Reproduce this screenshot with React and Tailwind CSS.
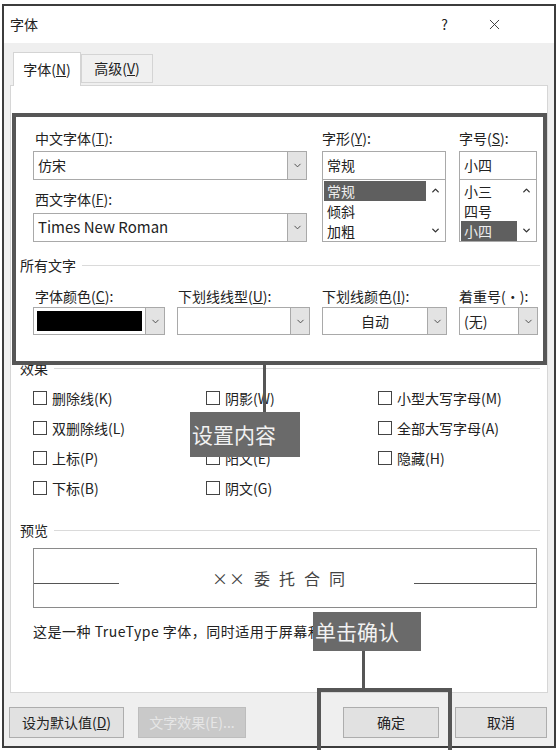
import { ChevronDown, ChevronUp, X } from 'lucide-react'

function Select({ children, className = '', center = false }) {
  return (
    <div className={`flex h-[29px] border border-[#a9a9a9] bg-white ${className}`}>
      <div className={`flex flex-1 items-center px-[4px] text-[14px] text-[#222] ${center ? 'justify-center' : ''}`}>{children}</div>
      <div className="flex w-[19px] items-center justify-center border-l border-[#a9a9a9] bg-[#e3e3e3]">
        <ChevronDown size={11} strokeWidth={2} className="text-[#444]" />
      </div>
    </div>
  )
}

function ListBox({ value, items, selected, width }) {
  return (
    <div style={{ width }}>
      <div className="flex h-[29px] items-center border border-[#a9a9a9] bg-white px-[4px] text-[14px] text-[#222]">{value}</div>
      <div className="flex h-[62px] border border-t-0 border-[#a9a9a9] bg-white">
        <div className="flex flex-1 flex-col pl-px pt-px">
          {items.map((it) => (
            <div key={it} className={`flex h-[20px] items-center px-[3px] text-[14px] ${it === selected ? 'bg-[#5f5f5f] text-[#eee]' : 'text-[#222]'}`}>{it}</div>
          ))}
        </div>
        <div className="flex w-[19px] flex-col items-center justify-between py-[5px]">
          <ChevronUp size={11} strokeWidth={3} className="text-[#333]" />
          <ChevronDown size={11} strokeWidth={3} className="text-[#333]" />
        </div>
      </div>
    </div>
  )
}

function Group({ label }) {
  return (
    <div className="flex h-[16px] items-center pl-[9px] pr-[7px]">
      <span className="text-[14px] text-[#222]">{label}</span>
      <div className="ml-[6px] h-px flex-1 bg-[#dadada]" />
    </div>
  )
}

function Check({ label }) {
  return (
    <div className="flex h-[30px] items-center">
      <div className="h-[14px] w-[14px] border border-[#444] bg-white" />
      <span className="ml-[5px] text-[14px] text-[#222]">{label}</span>
    </div>
  )
}

const col1 = ['删除线(K)', '双删除线(L)', '上标(P)', '下标(B)']
const col2 = ['阴影(W)', '空心(O)', '阳文(E)', '阴文(G)']
const col3 = ['小型大写字母(M)', '全部大写字母(A)', '隐藏(H)']

export default function App() {
  return (
    <div className="relative h-[750px] w-[558px] overflow-hidden bg-white font-['Noto_Sans_CJK_SC','Liberation_Sans',sans-serif]">
      <div className="ml-[2px] mt-[4px] flex h-[744px] w-[554px] flex-col border-2 border-[#3c3c3c] bg-[#efefef]">
        {/* title bar */}
        <div className="flex h-[37px] items-center bg-white pl-[6px] text-[14px] text-[#222]">
          <span>字体</span>
          <div className="flex-1" />
          <span className="mr-[38px] text-[14px]">?</span>
          <X size={17} strokeWidth={1.3} className="mr-[51px] text-[#333]" />
        </div>

        {/* tabs */}
        <div className="flex h-[42px] items-end pl-[9px]">
          <div className="relative z-10 -mb-px flex h-[34px] w-[68px] items-center justify-center border border-b-0 border-[#d4d4d4] bg-white text-[14px] text-[#222]">字体(<u>N</u>)</div>
          <div className="mb-[2px] flex h-[29px] w-[72px] items-center justify-center border border-[#d4d4d4] bg-[#f0f0f0] text-[14px] text-[#222]">高级(<u>V</u>)</div>
        </div>

        {/* panel */}
        <div className="mx-[6px] flex h-[608px] flex-col border border-[#d6d6d6] bg-white pt-[44px]">
          <div className="flex pl-[22px]">
            <div className="w-[274px]">
              <div className="h-[16px] pl-[2px] text-[14px] leading-[16px] text-[#222]">中文字体(<u>T</u>):</div>
              <Select className="mt-[5px]">仿宋</Select>
              <div className="mt-[11px] h-[16px] pl-[2px] text-[14px] leading-[16px] text-[#222]">西文字体(<u>F</u>):</div>
              <Select className="mt-[6px]"><span className="text-[15px]">Times New Roman</span></Select>
            </div>
            <div className="ml-[15px]">
              <div className="mb-[5px] h-[16px] text-[14px] leading-[16px] text-[#222]">字形(<u>Y</u>):</div>
              <ListBox value="常规" items={['常规', '倾斜', '加粗']} selected="常规" width={124} />
            </div>
            <div className="ml-[13px]">
              <div className="mb-[5px] h-[16px] text-[14px] leading-[16px] text-[#222]">字号(<u>S</u>):</div>
              <ListBox value="小四" items={['小三', '四号', '小四']} selected="小四" width={78} />
            </div>
          </div>

          <div className="mt-[15px]">
            <Group label="所有文字" />
          </div>

          <div className="mt-[15px] flex pl-[22px]">
            <div className="w-[132px]">
              <div className="h-[16px] pl-[2px] text-[14px] leading-[16px] text-[#222]">字体颜色(<u>C</u>):</div>
              <div className="mt-[3px] flex h-[28px] border border-[#a9a9a9] bg-white">
                <div className="m-[3px] flex-1 bg-black" />
                <div className="flex w-[19px] items-center justify-center border-l border-[#a9a9a9] bg-[#e3e3e3]">
                  <ChevronDown size={11} strokeWidth={2} className="text-[#444]" />
                </div>
              </div>
            </div>
            <div className="ml-[12px] w-[133px]">
              <div className="h-[16px] pl-[1px] text-[14px] leading-[16px] text-[#222]">下划线线型(<u>U</u>):</div>
              <Select className="mt-[3px] !h-[28px]"> </Select>
            </div>
            <div className="ml-[12px] w-[125px]">
              <div className="h-[16px] text-[14px] leading-[16px] text-[#222]">下划线颜色(<u>I</u>):</div>
              <Select className="mt-[3px] !h-[28px]" center>自动</Select>
            </div>
            <div className="ml-[12px] w-[79px]">
              <div className="h-[16px] whitespace-nowrap text-[14px] leading-[16px] text-[#222]">着重号(·):</div>
              <Select className="mt-[3px] !h-[28px]">(无)</Select>
            </div>
          </div>

          <div className="mt-[25px]">
            <Group label="效果" />
          </div>

          <div className="mt-[7px] flex pl-[22px]">
            <div className="w-[173px]">{col1.map((c) => <Check key={c} label={c} />)}</div>
            <div className="w-[172px]">{col2.map((c) => <Check key={c} label={c} />)}</div>
            <div>{col3.map((c) => <Check key={c} label={c} />)}</div>
          </div>

          <div className="mt-[19px]">
            <Group label="预览" />
          </div>

          <div className="ml-[22px] mt-[10px] flex h-[60px] w-[504px] items-center border border-[#8a8a8a] bg-white">
            <div className="mt-[10px] h-px w-[85px] bg-[#555]" />
            <div className="flex-1 pl-[93px] text-[16px] text-[#444]">
              <span className="tracking-[1px]">××</span>
              <span className="ml-[8px] tracking-[9px]">委托合同</span>
            </div>
            <div className="mt-[10px] h-px w-[122px] bg-[#555]" />
          </div>

          <div className="ml-[22px] mt-[15px] whitespace-nowrap text-[14px] leading-[16px] tracking-[0.5px] text-[#222]">这是一种 TrueType 字体，同时适用于屏幕和打印机。</div>
        </div>

        {/* bottom buttons */}
        <div className="flex h-[53px] items-start pt-[14px]">
          <div className="ml-[5px] flex h-[31px] w-[115px] items-center justify-center border border-[#adadad] bg-[#e1e1e1] text-[14px] text-[#222]">设为默认值(<u>D</u>)</div>
          <div className="ml-[14px] flex h-[31px] w-[108px] items-center justify-center border border-[#bdbdbd] bg-[#c9c9c9] text-[14px] text-[#e6e6e6]">文字效果(E)...</div>
          <div className="ml-[97px] flex h-[31px] w-[96px] items-center justify-center border border-[#adadad] bg-[#e1e1e1] text-[14px] text-[#222]">确定</div>
          <div className="ml-[16px] flex h-[31px] w-[92px] items-center justify-center border border-[#adadad] bg-[#e1e1e1] text-[14px] text-[#222]">取消</div>
        </div>
      </div>

      {/* annotation overlays */}
      <div className="absolute left-[12px] top-[113px] h-[252px] w-[535px] border-4 border-[#565656]" />
      <div className="absolute left-[263px] top-[365px] h-[48px] w-[3px] bg-[#565656]" />
      <div className="absolute left-[190px] top-[412px] flex h-[45px] w-[110px] items-center bg-[#6a6a6a] pl-[2px] text-[21px] text-[#f2f2f2]">设置内容</div>
      <div className="absolute left-[313px] top-[612px] flex h-[39px] w-[108px] items-center bg-[#6a6a6a] pl-[2px] text-[21px] text-[#f2f2f2]">单击确认</div>
      <div className="absolute left-[362px] top-[651px] h-[37px] w-[3px] bg-[#565656]" />
      <div className="absolute left-[317px] top-[688px] h-[72px] w-[135px] border-4 border-[#565656]" />
    </div>
  )
}
